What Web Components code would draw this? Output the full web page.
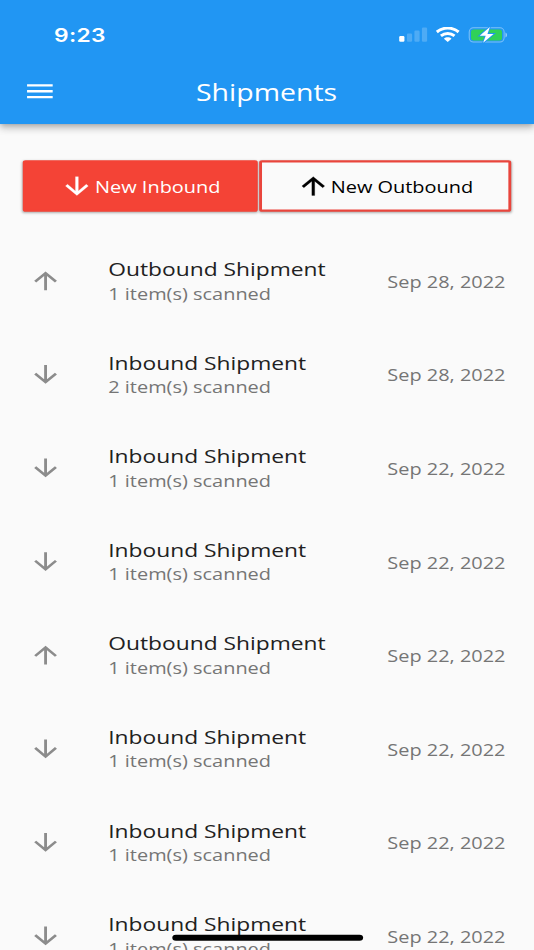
<!DOCTYPE html>
<html lang="en">
<head>
<meta charset="utf-8">
<title>Shipments</title>
<style>
  body {
    margin: 0;
    width: 534px;
    height: 950px;
    overflow: hidden;
    background: #fafafa;
    font-family: "Open Sans", "Noto Sans", sans-serif;
  }
</style>
</head>
<body>
<phone-screen>
  <app-bar slot="header" title="Shipments" time="9:23"></app-bar>
  <action-bar>
    <action-button icon="down" variant="filled">New Inbound</action-button>
    <action-button icon="up" variant="outlined">New Outbound</action-button>
  </action-bar>
  <shipment-list></shipment-list>
</phone-screen>

<script>
// The screen is laid out in 375x812 points and scaled to fill the window.
customElements.define("phone-screen", class extends HTMLElement {
  constructor() {
    super();
    this.attachShadow({ mode: 'open' });
    this.shadowRoot.innerHTML = `
      <style>
      :host {
        display: flex;
        flex-direction: column;
        position: relative;
        width: 375px;
        height: 812px;
        overflow: hidden;
        background: #fafafa;
        transform-origin: 0 0;
        transform: scale(1.424, 1.16995);
      }
      .home-indicator {
        position: absolute;
        left: 50%;
        bottom: 8px;
        width: 134px;
        height: 5px;
        margin-left: -67px;
        border-radius: 2.5px;
        background: #000;
      }
      </style>
      <slot name="header"></slot>
      <slot></slot>
      <div class="home-indicator"></div>`;
  }
});

customElements.define("arrow-icon", class extends HTMLElement {
  constructor() {
    super();
    this.attachShadow({ mode: 'open' });
    this.shadowRoot.innerHTML = `
      <style>
      :host {
        display: block;
        flex: none;
        width: 24px;
        height: 24px;
      }
      :host([direction="up"]) svg {
        transform: rotate(180deg);
      }
      svg {
        display: block;
        fill: currentColor;
      }
      </style>
      <svg width="24" height="24" viewBox="0 0 24 24">
        <path d="M20 12l-1.41-1.41L13 16.17V4h-2v12.17l-5.58-5.59L4 12l8 8 8-8z"/>
      </svg>`;
  }
});

customElements.define("status-bar", class extends HTMLElement {
  constructor() {
    super();
    this.attachShadow({ mode: 'open' });
    this.shadowRoot.innerHTML = `
      <style>
      :host {
        display: flex;
        align-items: center;
        justify-content: space-between;
        box-sizing: border-box;
        height: 50px;
        padding: 10px 18px 0 38px;
        color: #fff;
      }
      time {
        font: 600 16px/20px Inter, sans-serif;
        letter-spacing: .2px;
      }
      svg {
        display: block;
      }
      </style>
      <time>${this.getAttribute('time')}</time>
      <svg width="77.25" height="13.68" viewBox="0 0 110 16" preserveAspectRatio="none">
        <g fill="#fff">
          <rect x=".5" y="9.2" width="5.2" height="5.6" rx="1.2"/>
          <g opacity=".2">
            <rect x="8.2" y="6.7" width="5.2" height="8.1" rx="1.2"/>
            <rect x="15.7" y="3.6" width="5.2" height="11.2" rx="1.2"/>
            <rect x="23.2" y=".7" width="5.2" height="14.1" rx="1.2"/>
          </g>
        </g>
        <g fill="none" stroke="#fff" stroke-width="3">
          <path d="M38.1 5.1C44.3-.1 53.7-.1 59.9 5.1"/>
          <path d="M42.2 9C46.1 5.8 51.9 5.8 55.8 9"/>
        </g>
        <path d="M45.2 11.8C47.3 10 50.7 10 52.8 11.8L49 15.1z" fill="#fff"/>
        <rect x="70.5" y=".9" width="34.9" height="14.2" rx="4.2" fill="none" stroke="#fff" stroke-opacity=".42"/>
        <path d="M106.7 5.6c2.2.7 2.2 4.2 0 4.9z" fill="#fff" opacity=".5"/>
        <rect x="72.3" y="2.5" width="31" height="11" rx="2.7" fill="#30d158"/>
        <path d="M91.2 0L81 8.8H87L84.4 15.9L94.8 7H88.7z" fill="#fff" stroke="#2196f3" stroke-width="1.8" paint-order="stroke"/>
      </svg>`;
  }
});

customElements.define("app-bar", class extends HTMLElement {
  constructor() {
    super();
    this.attachShadow({ mode: 'open' });
    this.shadowRoot.innerHTML = `
      <style>
      :host {
        display: block;
        position: relative;
        height: 106px;
        flex: none;
        background: #2196f3;
        color: #fff;
        box-shadow: 0 2px 4px -1px rgba(0, 0, 0, .2), 0 4px 5px 0 rgba(0, 0, 0, .14), 0 1px 10px 0 rgba(0, 0, 0, .12);
      }
      .toolbar {
        display: grid;
        grid-template-columns: 56px 1fr 56px;
        align-items: center;
        height: 56px;
      }
      .menu {
        display: block;
        margin: 0 16px;
        fill: currentColor;
      }
      h1 {
        margin: 0;
        padding: 1.6px .6px 0 0;
        font-size: 20px;
        font-weight: 400;
        line-height: 28px;
        text-align: center;
      }
      </style>
      <status-bar time="${this.getAttribute('time')}"></status-bar>
      <div class="toolbar">
        <svg class="menu" width="24" height="24" viewBox="0 0 24 24">
          <path d="M3 18h18v-2H3v2zm0-5h18v-2H3v2zm0-7v2h18V6H3z"/>
        </svg>
        <h1>${this.getAttribute('title')}</h1>
      </div>`;
  }
});

customElements.define("action-bar", class extends HTMLElement {
  constructor() {
    super();
    this.attachShadow({ mode: 'open' });
    this.shadowRoot.innerHTML = `
      <style>
      :host {
        display: grid;
        grid-template-columns: 165.2px 177px;
        gap: .4px;
        flex: none;
        height: 44px;
        padding: 31px 16.2px 19px;
      }
      </style>
      <slot></slot>`;
  }
});

customElements.define("action-button", class extends HTMLElement {
  constructor() {
    super();
    this.attachShadow({ mode: 'open' });
    this.shadowRoot.innerHTML = `
      <style>
      :host {
        display: block;
      }
      button {
        display: flex;
        align-items: center;
        justify-content: center;
        gap: .3px;
        box-sizing: border-box;
        width: 100%;
        height: 44px;
        padding: 0 .3px 0 0;
        border: 2px solid #f44336;
        border-radius: 2px;
        background: #f44336;
        color: #fff;
        font: 400 14px/20px "Open Sans", "Noto Sans", sans-serif;
        box-shadow: 0 1px 2px rgba(0, 0, 0, .3);
      }
      :host([variant="outlined"]) button {
        border-color: #e9453c;
        background: #fafafa;
        color: #000;
      }
      arrow-icon {
        stroke: currentColor;
        stroke-width: .2px;
      }
      span {
        padding-top: 1.2px;
      }
      </style>
      <button>
        <arrow-icon direction="${this.getAttribute('icon')}"></arrow-icon>
        <span><slot></slot></span>
      </button>`;
  }
});

customElements.define("shipment-tile", class extends HTMLElement {
  constructor() {
    super();
    this.attachShadow({ mode: 'open' });
  }

  connectedCallback() {
    const { direction, count, date } = this.dataset;
    this.shadowRoot.innerHTML = `
      <style>
      :host {
        display: grid;
        grid-template-columns: 56px 1fr auto;
        align-items: center;
        height: 80px;
        padding: 0 20px;
      }
      arrow-icon {
        color: #8c8c8c;
      }
      .title {
        font-size: 16px;
        line-height: 21px;
        color: #212121;
      }
      .subtitle, .date {
        font-size: 14px;
        line-height: 20px;
        color: #757575;
      }
      .date {
        padding-top: 1px;
      }
      </style>
      <arrow-icon direction="${direction}"></arrow-icon>
      <div>
        <div class="title">${direction === 'up' ? 'Outbound' : 'Inbound'} Shipment</div>
        <div class="subtitle">${count} item(s) scanned</div>
      </div>
      <div class="date">${date}</div>`;
  }
});

customElements.define("shipment-list", class extends HTMLElement {
  constructor() {
    super();
    this.attachShadow({ mode: 'open' });
    const shipments = [
      ['up', 1, 'Sep 28, 2022'],
      ['down', 2, 'Sep 28, 2022'],
      ['down', 1, 'Sep 22, 2022'],
      ['down', 1, 'Sep 22, 2022'],
      ['up', 1, 'Sep 22, 2022'],
      ['down', 1, 'Sep 22, 2022'],
      ['down', 1, 'Sep 22, 2022'],
      ['down', 1, 'Sep 22, 2022'],
    ];
    this.shadowRoot.innerHTML = `
      <style>
      :host {
        display: block;
      }
      </style>
      ${shipments.map(([direction, count, date]) => `
        <shipment-tile data-direction="${direction}" data-count="${count}" data-date="${date}"></shipment-tile>`).join('')}`;
  }
});
</script>
</body>
</html>
